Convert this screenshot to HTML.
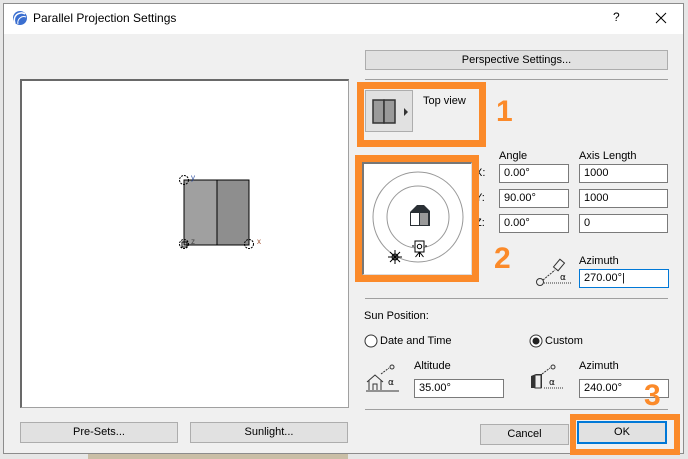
<!DOCTYPE html>
<html><head><meta charset="utf-8">
<style>
*{box-sizing:border-box;margin:0;padding:0}
body{width:688px;height:459px;overflow:hidden;background:#e6e6e6;font-family:"Liberation Sans",sans-serif;font-size:11px;color:#000;position:relative}
.a{position:absolute}
.btn{position:absolute;background:#e1e1e1;border:1px solid #adadad;text-align:center;font-size:11px;line-height:19px}
.inp{position:absolute;background:#fff;border:1px solid #7a7a7a;height:19px;padding-left:4px;line-height:17px;font-size:11px}
.sep{position:absolute;height:1px;background:#a0a0a0}
.og{position:absolute;border:7px solid #fb8a2a}
.num{position:absolute;color:#fb8a2a;font-weight:bold;font-size:30px;line-height:30px}
</style></head><body>
<div class="a" style="left:88px;top:453px;width:260px;height:6px;background:#c9bea6"></div>
<div class="a" style="left:3px;top:3px;width:681px;height:451px;background:#f0f0f0;border:1px solid #8c8c8c"></div>
<div class="a" style="left:4px;top:4px;width:679px;height:30px;background:#fff"></div>
<svg class="a" style="left:12px;top:10px" width="16" height="16"><circle cx="8" cy="8" r="7" fill="#3b6fd0"/><path d="M3 13 A7 7 0 0 1 13 4" stroke="#fff" stroke-width="1.5" fill="none"/><path d="M6 14 A6 6 0 0 1 14 7" stroke="#fff" stroke-width="1" fill="none"/></svg>
<div class="a" style="left:33px;top:11px;font-size:12px">Parallel Projection Settings</div>
<div class="a" style="left:613px;top:10px;font-size:12px">?</div>
<svg class="a" style="left:655px;top:12px" width="12" height="12"><path d="M1 1L11 11M11 1L1 11" stroke="#000" stroke-width="1"/></svg>

<div class="a" style="left:20px;top:79px;width:329px;height:329px;background:#fff;border:1px solid #a0a0a0;border-left:2px solid #696969;border-top:2px solid #696969"></div>
<svg class="a" style="left:170px;top:170px" width="100" height="85">
<rect x="14" y="10" width="33" height="65" fill="#a0a0a0" stroke="#000"/>
<rect x="47" y="10" width="32" height="65" fill="#8e8e8e" stroke="#000"/>
<circle cx="14" cy="10" r="4.5" fill="none" stroke="#000" stroke-dasharray="2 1"/>
<circle cx="14" cy="74" r="4.5" fill="none" stroke="#000" stroke-dasharray="2 1"/>
<circle cx="79" cy="74" r="4.5" fill="none" stroke="#000" stroke-dasharray="2 1"/>
<rect x="12" y="72" width="5" height="5" fill="none" stroke="#000"/>
<text x="21" y="10" font-size="8" fill="#3050a0" font-family="Liberation Sans">y</text>
<text x="21" y="74" font-size="8" fill="#444" font-family="Liberation Sans">z</text>
<text x="87" y="74" font-size="8" fill="#a05030" font-family="Liberation Sans">x</text>
</svg>
<div class="btn" style="left:20px;top:422px;width:158px;height:21px">Pre-Sets...</div>
<div class="btn" style="left:190px;top:422px;width:158px;height:21px">Sunlight...</div>

<div class="btn" style="left:365px;top:50px;width:303px;height:20px">Perspective Settings...</div>
<div class="sep" style="left:365px;top:79px;width:303px"></div>

<div class="og" style="left:357px;top:82px;width:129px;height:65px"></div>
<div class="a" style="left:365px;top:90px;width:48px;height:42px;background:#e1e1e1;border:1px solid #adadad"></div>
<svg class="a" style="left:372px;top:99px" width="40" height="26"><rect x="1" y="1" width="11" height="23" fill="#9a9a9a" stroke="#333" stroke-width="1.5"/><rect x="12" y="1" width="11" height="23" fill="#9a9a9a" stroke="#333" stroke-width="1.5"/><path d="M32 9l4 4-4 4z" fill="#333"/></svg>
<div class="a" style="left:423px;top:95px">Top view</div>
<div class="num" style="left:496px;top:97px">1</div>

<div class="a" style="left:475px;top:167px">X:</div>
<div class="a" style="left:475px;top:192px">Y:</div>
<div class="a" style="left:475px;top:217px">Z:</div>
<div class="og" style="left:355px;top:155px;width:124px;height:127px"></div>
<div class="a" style="left:362px;top:162px;width:110px;height:113px;background:#fff;border:2px solid #777;border-right:1px solid #ddd;border-bottom:1px solid #ddd"></div>
<svg class="a" style="left:364px;top:164px" width="108" height="109">
<circle cx="54" cy="53" r="45" fill="none" stroke="#999"/>
<circle cx="54" cy="53" r="31" fill="none" stroke="#999"/>
<path d="M46 48L53 41H60L66 47V62H46Z" fill="#2a3035"/>
<rect x="46.5" y="48.5" width="9" height="13" fill="#fff" stroke="#2a3035"/><rect x="55.5" y="48.5" width="9" height="13" fill="#999" stroke="#2a3035"/>
<rect x="51" y="77" width="9" height="11" fill="#fff" stroke="#000"/><circle cx="55.5" cy="82.5" r="2.2" fill="none" stroke="#000"/><path d="M55.5 88v5M55.5 88l-4 5M55.5 88l4 5M50 82h-2M61 82h2" stroke="#000"/>
<g stroke="#000"><circle cx="31" cy="93" r="3" fill="none"/><path d="M26 88l10 10M36 88l-10 10M31 86v14M24 93h14"/></g>
</svg>

<div class="a" style="left:499px;top:150px">Angle</div>
<div class="a" style="left:579px;top:150px">Axis Length</div>
<div class="inp" style="left:499px;top:164px;width:70px">0.00°</div>
<div class="inp" style="left:579px;top:164px;width:89px">1000</div>
<div class="inp" style="left:499px;top:189px;width:70px">90.00°</div>
<div class="inp" style="left:579px;top:189px;width:89px">1000</div>
<div class="inp" style="left:499px;top:214px;width:70px">0.00°</div>
<div class="inp" style="left:579px;top:214px;width:89px">0</div>
<div class="num" style="left:494px;top:244px">2</div>
<svg class="a" style="left:535px;top:256px" width="40" height="32"><circle cx="5" cy="26" r="3.5" fill="none" stroke="#333"/><path d="M8 24l12-10" stroke="#333" stroke-dasharray="2 1"/><rect x="21" y="4" width="6" height="10" transform="rotate(40 24 9)" fill="none" stroke="#333"/><path d="M9 27h27" stroke="#333" stroke-dasharray="1 1"/><text x="25" y="24" font-size="9" font-family="DejaVu Sans">α</text></svg>
<div class="a" style="left:579px;top:255px">Azimuth</div>
<div class="inp" style="left:579px;top:269px;width:90px;border-color:#0078d7">270.00°|</div>
<div class="sep" style="left:365px;top:298px;width:303px"></div>

<div class="a" style="left:364px;top:310px">Sun Position:</div>
<svg class="a" style="left:364px;top:334px" width="14" height="14"><circle cx="7" cy="7" r="6" fill="#fff" stroke="#333"/></svg>
<div class="a" style="left:380px;top:335px">Date and Time</div>
<svg class="a" style="left:529px;top:334px" width="14" height="14"><circle cx="7" cy="7" r="6" fill="#fff" stroke="#333"/><circle cx="7" cy="7" r="3.5" fill="#222"/></svg>
<div class="a" style="left:545px;top:335px">Custom</div>

<svg class="a" style="left:365px;top:362px" width="36" height="32"><path d="M2 20l8-7 8 7M4 18v10M16 18v10M8 28v-6h4v6" fill="none" stroke="#333"/><path d="M1 29h33" stroke="#333"/><path d="M16 12l8-6" stroke="#333" stroke-dasharray="2 1"/><circle cx="27" cy="5" r="2" fill="none" stroke="#333"/><text x="23" y="23" font-size="9" font-family="DejaVu Sans">α</text></svg>
<div class="a" style="left:414px;top:360px">Altitude</div>
<div class="inp" style="left:414px;top:379px;width:90px">35.00°</div>
<svg class="a" style="left:529px;top:362px" width="36" height="32"><path d="M2 14l5-2h6v14h-11z" fill="#333"/><rect x="6" y="13" width="6" height="13" fill="#eee" stroke="#333"/><path d="M15 26h20" stroke="#333" stroke-dasharray="1 1"/><path d="M13 12l8-6" stroke="#333" stroke-dasharray="2 1"/><circle cx="24" cy="5" r="2" fill="none" stroke="#333"/><text x="20" y="23" font-size="9" font-family="DejaVu Sans">α</text></svg>
<div class="a" style="left:579px;top:360px">Azimuth</div>
<div class="inp" style="left:579px;top:379px;width:90px">240.00°</div>
<div class="num" style="left:644px;top:381px">3</div>
<div class="sep" style="left:365px;top:409px;width:303px"></div>

<div class="btn" style="left:480px;top:424px;width:89px;height:21px">Cancel</div>
<div class="og" style="left:570px;top:414px;width:110px;height:41px;border-width:6px"></div>
<div class="btn" style="left:577px;top:421px;width:90px;height:23px;border:2px solid #0078d7;line-height:19px">OK</div>
</body></html>
